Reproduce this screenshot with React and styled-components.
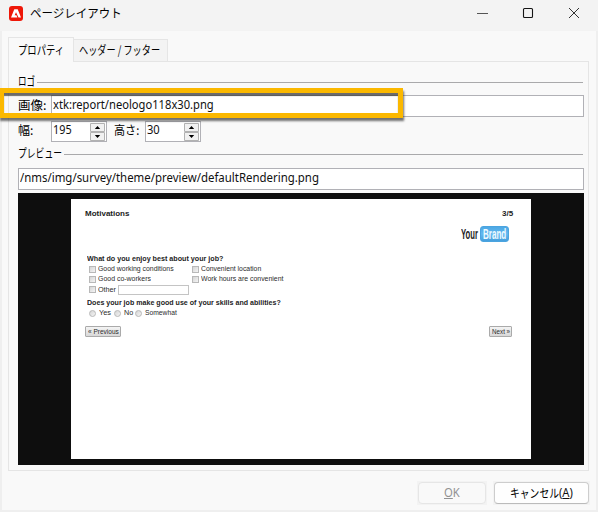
import React, { useLayoutEffect, useRef, useState } from "react";
import styled, { createGlobalStyle } from "styled-components";

const Global = createGlobalStyle`
  * { box-sizing: border-box; }
  body { margin: 0; background: #f9f9f9; overflow: hidden; }
`;

const Window = styled.div`
  position: relative;
  width: 598px;
  height: 512px;
  display: flex;
  flex-direction: column;
  background: #f9f9f9;
  border: solid #efefef;
  border-width: 0 2px 2px;
  font: 12px/16px "Noto Sans", "Noto Sans CJK JP", sans-serif;
  color: #111;
`;

const FitBox = styled.span`
  display: inline-block;
  flex: none;
  width: ${(p) => p.$w}px;
  white-space: nowrap;
`;
const FitInner = styled.span`
  display: inline-block;
  transform-origin: 0 50%;
`;

/* Condenses a label so that it fills exactly the given width. */
function Fit({ w, children, className }) {
  const ref = useRef(null);
  const [scale, setScale] = useState(1);
  useLayoutEffect(() => {
    setScale(w / ref.current.offsetWidth);
  }, [w, children]);
  return (
    <FitBox $w={w} className={className}>
      <FitInner ref={ref} style={{ transform: `scaleX(${scale})` }}>{children}</FitInner>
    </FitBox>
  );
}

const Label = styled(Fit)`
  font-family: "Noto Sans CJK JP", sans-serif;
  color: #000;
`;

const TitleBar = styled.header`
  height: 31px;
  flex: none;
  margin: 0 -2px;
  padding: 0 18px 5px 9px;
  display: flex;
  align-items: center;
  background: #f3f3f3;
`;
const AppIcon = styled.svg`
  width: 14px;
  height: 15px;
  margin-right: 7px;
`;
const WindowControls = styled.svg`
  width: 104px;
  height: 12px;
  margin-left: auto;
`;

const Tabs = styled.nav`
  display: flex;
  align-items: flex-end;
  height: 30px;
  flex: none;
  padding-left: 6px;
`;
const Tab = styled.div`
  height: ${(p) => (p.$active ? 25 : 22)}px;
  width: ${(p) => p.$w}px;
  padding: ${(p) => (p.$active ? "4px 0 0 9px" : "2px 0 0 5px")};
  background: ${(p) => (p.$active ? "#f9f9f9" : "#f3f3f3")};
  border: 1px solid #e5e5e5;
  border-bottom: 0;
  border-left-width: ${(p) => (p.$active ? 1 : 0)}px;
  margin-bottom: ${(p) => (p.$active ? -1 : 0)}px;
  z-index: ${(p) => (p.$active ? 1 : 0)};
`;
const Panel = styled.main`
  height: 410px;
  width: 581px;
  flex: none;
  margin-left: 6px;
  padding: 12px 3px 0 9px;
  border: 1px solid #e5e5e5;
  display: flex;
  flex-direction: column;
`;
const Section = styled.div`
  height: 16px;
  width: 565px;
  flex: none;
  display: flex;
  align-items: center;
  gap: 2px;
  margin-bottom: ${(p) => p.$gap}px;
  & > span {
    margin-top: -2px;
  }
  &::after {
    content: "";
    flex: 1;
    height: 1px;
    margin-top: 1px;
    background: #a9a9ab;
  }
`;
const Row = styled.div`
  display: flex;
  align-items: center;
  flex: none;
  height: ${(p) => p.$h}px;
  margin-bottom: ${(p) => p.$gap}px;
`;
const Field = styled(FitBox)`
  margin-top: ${(p) => p.$lift || 0}px;
`;
const Input = styled.div`
  flex: none;
  width: ${(p) => p.$w}px;
  height: 22px;
  padding: 1px 0 0 1px;
  background: #fff;
  border: 1px solid #b1b1b6;
`;
const Spin = styled.div`
  display: flex;
  align-items: center;
  justify-content: space-between;
  width: 56px;
  height: 21px;
  padding: 0 1px;
  background: #fff;
  border: 1px solid #b1b1b6;
  margin-right: ${(p) => p.$gap || 0}px;
`;
const SpinValue = styled(Fit)`
  margin-top: -3px;
`;
const SpinArrows = styled.svg`
  width: 15px;
  height: 18px;
`;

function Spinner({ value, w, gap }) {
  return (
    <Spin $gap={gap}>
      <SpinValue w={w}>{value}</SpinValue>
      <SpinArrows viewBox="0 0 15 18">
        <path d="M.5.5h14v8H.5zM.5 9.5h14v8H.5z" fill="#f1f1f1" stroke="#b2b2b2" />
        <path d="M4.8 6h5.4L7.5 3zM4.8 12h5.4L7.5 15z" fill="#000" />
      </SpinArrows>
    </Spin>
  );
}

const Highlight = styled.div`
  position: absolute;
  left: -3px;
  top: 88px;
  width: 404px;
  height: 30px;
  border: 5px solid #fbb800;
  box-shadow: 1px 3px 2px rgba(40, 40, 40, 0.65), inset 0 3px 1px rgba(40, 40, 40, 0.68);
`;

const Preview = styled.section`
  width: 566px;
  height: 272px;
  flex: none;
  padding: 6px 53px;
  background: #0e0e0e;
`;
const Page = styled.div`
  width: 460px;
  height: 260px;
  padding: 10px 18px 0 14px;
  background: #fff;
  font: 8px/10px "Liberation Sans", Arial, sans-serif;
  color: #2b2b2b;
`;
const Strong = styled(Fit)`
  font-weight: bold;
  color: #1c1c1c;
`;
const PageHead = styled.div`
  display: flex;
  justify-content: space-between;
  height: 16px;
`;
const Logo = styled.div`
  display: flex;
  align-items: center;
  height: 18px;
  margin-left: 376px;
  gap: 2px;
  font-size: 14px;
  font-weight: bold;
  line-height: 16px;
  color: #1d1d1d;
`;
const LogoBadge = styled.span`
  display: flex;
  width: 29px;
  height: 16px;
  padding-left: 2px;
  border: 1px solid #4ba4df;
  line-height: 14px;
  border-radius: 3px;
  background: linear-gradient(#4da8e4, #62b8f0 50%, #459fdd);
  color: #eefaff;
`;
const Question = styled.div`
  height: 10px;
  margin: ${(p) => p.$top}px 0 0 2px;
`;
const Options = styled.div`
  display: flex;
  align-items: center;
  height: ${(p) => p.$h || 10}px;
  margin-left: 4px;
`;
const Mark = styled.span`
  flex: none;
  width: 7px;
  height: 7px;
  margin: 0 ${(p) => (p.$round ? 3 : 2)}px 0 ${(p) => p.$left || 0}px;
  border: 1px solid #b8b8b8;
  border-radius: ${(p) => (p.$round ? "50%" : 0)};
  background: linear-gradient(135deg, #d5d5d5, #f4f4f4);
`;
const OtherField = styled.span`
  width: 71px;
  height: 10px;
  margin-left: 2px;
  border: 1px solid #c4c4c4;
`;
const PageNav = styled.div`
  display: flex;
  justify-content: space-between;
  margin-top: 8px;
  margin-right: 1px;
`;
const PageButton = styled.span`
  display: flex;
  width: ${(p) => p.$w}px;
  height: 11px;
  padding-left: 2px;
  line-height: 9px;
  border: 1px solid #aaa;
  border-radius: 1px;
  background: linear-gradient(#f4f4f4, #d8d8d8);
`;

const Footer = styled.footer`
  display: flex;
  gap: 6px;
  justify-content: flex-end;
  padding: 10px 6px 0 0;
`;
const Halo = styled.div`
  padding: 1px;
  background: #f3f3f3;
`;
const Button = styled.div`
  display: flex;
  justify-content: center;
  align-items: center;
  width: ${(p) => p.$w}px;
  height: 22px;
  padding-bottom: 1px;
  border: 1px solid ${(p) => (p.$disabled ? "#e6e6e6" : "#cdcdcd")};
  border-bottom-color: ${(p) => (p.$disabled ? "#e6e6e6" : "#bbb")};
  border-radius: 4px;
  background: ${(p) => (p.$disabled ? "#f9f9f9" : "#fefefe")};
  color: ${(p) => (p.$disabled ? "#929292" : "#111")};
`;

export default function App() {
  return (
    <Window>
      <Global />
      <TitleBar>
        <AppIcon viewBox="0 0 14 15">
          <rect width="14" height="15" rx="3" fill="#ee1708" />
          <path d="M5.3 3.2h3.4L12 11.6H9.5L7 6.2l-1.3 3h1.7l1 2.4H2z" fill="#fff" />
        </AppIcon>
        <Label w={92}>ページレイアウト</Label>
        <WindowControls viewBox="0 0 104 12" fill="none" stroke="#333">
          <path d="M1 6.5h11" stroke="#555" />
          <rect x="47.5" y="1.5" width="9" height="9" rx="1" stroke="#151515" strokeWidth="1.1" />
          <path d="M93 1l10 10M103 1L93 11" />
        </WindowControls>
      </TitleBar>
      <Tabs>
        <Tab $active $w={66}><Label w={46}>プロパティ</Label></Tab>
        <Tab $w={94}><Label w={81}>ヘッダー / フッター</Label></Tab>
      </Tabs>
      <Panel>
        <Section $gap={5}><Label w={17}>ロゴ</Label></Section>
        <Row $h={22} $gap={4}>
          <Field $w={33} $lift={-2}><Label w={28}>画像:</Label></Field>
          <Input $w={533}><Fit w={161}>xtk:report/neologo118x30.png</Fit></Input>
        </Row>
        <Row $h={21} $gap={4}>
          <Field $w={33} $lift={-3}><Label w={15}>幅:</Label></Field>
          <Spinner value="195" w={19} gap={7} />
          <Field $w={31} $lift={-3}><Label w={25}>高さ:</Label></Field>
          <Spinner value="30" w={13} />
        </Row>
        <Section $gap={6}><Label w={44}>プレビュー</Label></Section>
        <Row $h={22} $gap={3}>
          <Input $w={566}><Fit w={299}>/nms/img/survey/theme/preview/defaultRendering.png</Fit></Input>
        </Row>
        <Preview>
          <Page>
            <PageHead><Strong w={44}>Motivations</Strong><Strong w={11}>3/5</Strong></PageHead>
            <Logo>
              <Fit w={17}>Your</Fit>
              <LogoBadge><Fit w={23}>Brand</Fit></LogoBadge>
            </Logo>
            <Question $top={11}><Strong w={136}>What do you enjoy best about your job?</Strong></Question>
            <Options>
              <Mark /><Fit w={76}>Good working conditions</Fit>
              <Mark $left={18} /><Fit w={60}>Convenient location</Fit>
            </Options>
            <Options>
              <Mark /><Fit w={53}>Good co-workers</Fit>
              <Mark $left={41} /><Fit w={82}>Work hours are convenient</Fit>
            </Options>
            <Options $h={11}>
              <Mark /><Fit w={18}>Other</Fit><OtherField />
            </Options>
            <Question $top={3}><Strong w={194}>Does your job make good use of your skills and abilities?</Strong></Question>
            <Options>
              <Mark $round /><Fit w={12}>Yes</Fit>
              <Mark $round $left={3} /><Fit w={9}>No</Fit>
              <Mark $round $left={2} /><Fit w={32}>Somewhat</Fit>
            </Options>
            <PageNav>
              <PageButton $w={36}><Fit w={31}>« Previous</Fit></PageButton>
              <PageButton $w={23}><Fit w={18}>Next »</Fit></PageButton>
            </PageNav>
          </Page>
        </Preview>
      </Panel>
      <Footer>
        <Halo><Button $w={68} $disabled><Fit w={16}><u>O</u>K</Fit></Button></Halo>
        <Halo><Button $w={95}><Label w={49}>キャンセル</Label><Fit w={14}>(<u>A</u>)</Fit></Button></Halo>
      </Footer>
      <Highlight />
    </Window>
  );
}
